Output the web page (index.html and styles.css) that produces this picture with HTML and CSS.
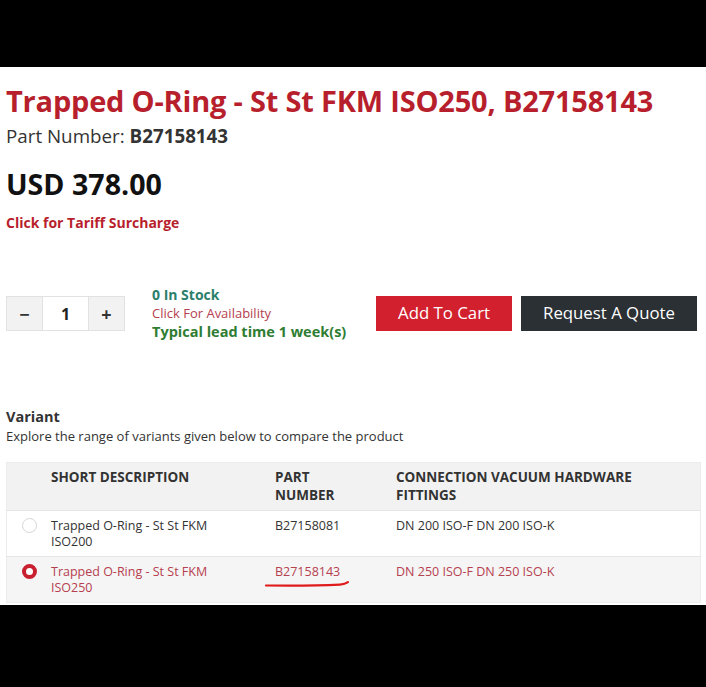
FILE: index.html
```html
<!DOCTYPE html>
<html lang="en">
<head>
<meta charset="utf-8">
<title>Trapped O-Ring - St St FKM ISO250, B27158143</title>
<link rel="stylesheet" href="styles.css">
</head>
<body>
<div class="letterbox"></div>
<main class="sheet">
  <h1 class="title">Trapped O-Ring - St St FKM ISO250, B27158143</h1>
  <p class="part">Part Number: <b>B27158143</b></p>
  <p class="price">USD 378.00</p>
  <a class="tariff" href="#">Click for Tariff Surcharge</a>

  <div class="buy-row">
    <div class="qty">
      <button class="qty-btn" type="button">&minus;</button>
      <span class="qty-val">1</span>
      <button class="qty-btn" type="button">+</button>
    </div>
    <div class="stock">
      <span class="stock-count">0 In Stock</span>
      <a class="stock-link" href="#">Click For Availability</a>
      <span class="lead">Typical lead time 1 week(s)</span>
    </div>
    <button class="btn btn-cart" type="button">Add To Cart</button>
    <button class="btn btn-quote" type="button">Request A Quote</button>
  </div>

  <section class="variants">
    <h2 class="variants-title">Variant</h2>
    <p class="variants-sub">Explore the range of variants given below to compare the product</p>
    <table class="vtable">
      <thead>
        <tr>
          <th class="c-radio"></th>
          <th class="c-desc">SHORT DESCRIPTION</th>
          <th class="c-part">PART<br>NUMBER</th>
          <th class="c-conn">CONNECTION VACUUM HARDWARE<br>FITTINGS</th>
        </tr>
      </thead>
      <tbody>
        <tr>
          <td class="c-radio"><span class="radio"></span></td>
          <td class="c-desc">Trapped O-Ring - St St FKM<br>ISO200</td>
          <td class="c-part">B27158081</td>
          <td class="c-conn">DN 200 ISO-F DN 200 ISO-K</td>
        </tr>
        <tr class="selected">
          <td class="c-radio"><span class="radio on"></span></td>
          <td class="c-desc">Trapped O-Ring - St St FKM<br>ISO250</td>
          <td class="c-part"><span class="marked">B27158143<svg class="scribble" viewBox="0 0 90 10" width="90" height="10"><path d="M2 6.5 C 25 6.8, 55 6.6, 76 5.6 C 80 5.4, 82 4.6, 84 3.2" fill="none" stroke="#e01b1b" stroke-width="2.2" stroke-linecap="round"/></svg></span></td>
          <td class="c-conn">DN 250 ISO-F DN 250 ISO-K</td>
        </tr>
      </tbody>
    </table>
  </section>
</main>
<div class="letterbox bottom"></div>
</body>
</html>
```
FILE: styles.css
```css
html, body {
  margin: 0;
  padding: 0;
  background: #000;
}

body {
  width: 706px;
  height: 687px;
  overflow: hidden;
  display: flex;
  flex-direction: column;
  font-family: "Open Sans", "Noto Sans", sans-serif;
  color: #333;
}

.letterbox {
  height: 67px;
  flex: none;
  background: #000;
}

.letterbox.bottom {
  flex: 1;
}

.sheet {
  height: 538px;
  flex: none;
  overflow: hidden;
  background: #fff;
  padding: 0 5px 0 6px;
}

.title {
  margin: 16px 0 0;
  font-size: 29px;
  line-height: 36px;
  font-weight: 700;
  color: #b81f2d;
  letter-spacing: -0.2px;
}

.part {
  margin: 5px 0 0;
  font-size: 18.8px;
  line-height: 24px;
  color: #333;
}

.part b {
  font-weight: 700;
}

.price {
  margin: 19px 0 0;
  font-size: 28.6px;
  line-height: 34px;
  font-weight: 700;
  color: #111;
}

.tariff {
  display: block;
  margin-top: 12px;
  font-size: 14px;
  line-height: 20px;
  font-weight: 700;
  color: #b81f2d;
  text-decoration: none;
}

.buy-row {
  display: flex;
  align-items: center;
  margin-top: 52px;
}

.qty {
  display: flex;
  height: 35px;
  border: 1px solid #e2e2e2;
  box-sizing: border-box;
}

.qty-btn {
  width: 35px;
  border: 0;
  background: #f2f2f2;
  font: 700 18px/1 "Open Sans", sans-serif;
  color: #333;
  padding: 0;
}

.qty-val {
  width: 45px;
  border-left: 1px solid #e2e2e2;
  border-right: 1px solid #e2e2e2;
  display: flex;
  align-items: center;
  justify-content: center;
  font-size: 16px;
  font-weight: 700;
  color: #222;
}

.stock {
  display: flex;
  flex-direction: column;
  margin-left: 27px;
  width: 224px;
}

.stock-count {
  font-size: 14px;
  line-height: 19px;
  font-weight: 700;
  color: #2b7f6c;
}

.stock-link {
  font-size: 13px;
  line-height: 18px;
  color: #b5404f;
  text-decoration: none;
}

.lead {
  font-size: 14.5px;
  line-height: 20px;
  font-weight: 700;
  color: #2e7d32;
}

.btn {
  height: 35px;
  border: 0;
  padding: 0;
  font: 400 16.8px/1 "Open Sans", sans-serif;
  color: #fff;
}

.btn-cart {
  width: 136px;
  background: #d2202f;
}

.btn-quote {
  width: 176px;
  margin-left: 9px;
  background: #2b3035;
}

.variants {
  margin-top: 65px;
}

.variants-title {
  margin: 0;
  font-size: 14.5px;
  line-height: 20px;
  font-weight: 700;
  color: #333;
}

.variants-sub {
  margin: 0;
  font-size: 13px;
  line-height: 18px;
  color: #333;
}

.vtable {
  margin-top: 17px;
  width: 695px;
  border-collapse: collapse;
  border: 1px solid #ececec;
  font-size: 12.5px;
}

.vtable th {
  background: #f2f2f2;
  text-align: left;
  vertical-align: top;
  font-weight: 700;
  font-size: 13.5px;
  line-height: 18px;
  color: #333;
  padding: 5px 0 6px;
}

.vtable td {
  vertical-align: top;
  line-height: 16px;
  color: #333;
  padding: 7px 0 6px;
}

.vtable tbody tr {
  border-top: 1px solid #e6e6e6;
}

.vtable tr.selected td {
  background: #f5f5f5;
  color: #b5404f;
}

.c-radio {
  width: 44px;
}

.c-desc {
  width: 224px;
}

.c-part {
  width: 121px;
}

.radio {
  display: block;
  width: 15px;
  height: 15px;
  margin: 0 0 0 15px;
  border: 1px solid #d6d6d6;
  border-radius: 50%;
  background: #fff;
  box-sizing: border-box;
}

.radio.on {
  border: 4.5px solid #c8202e;
  background: #fff;
}

.marked {
  position: relative;
  display: inline-block;
}

.scribble {
  position: absolute;
  left: -11px;
  top: 15px;
  overflow: visible;
}
```
